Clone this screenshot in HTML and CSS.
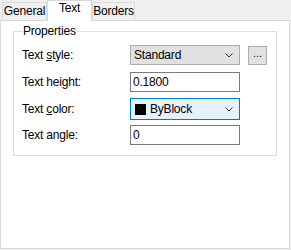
FILE: index.html
```html
<!DOCTYPE html>
<html lang="en">
<head>
    <meta charset="UTF-8">
    <title>Text Properties</title>
    <link rel="stylesheet" href="styles.css">
</head>
<body>
    <div class="tabs">
        <div class="tab tab-general">General</div>
        <div class="tab tab-text active">Text</div>
        <div class="tab tab-borders">Borders</div>
    </div>
    <div class="panel">
        <fieldset class="group">
            <legend>Properties</legend>

            <div class="row row-style">
                <label class="label">Text <u>s</u>tyle:</label>
                <div class="combo">
                    <span class="combo-text">Standard</span>
                    <svg class="chevron" width="8" height="5" viewBox="0 0 8 5"><path d="M0.5 0.5 L4 4 L7.5 0.5" fill="none" stroke="#333" stroke-width="1"/></svg>
                </div>
                <button class="browse">...</button>
            </div>

            <div class="row row-height">
                <label class="label">Text hei<u>g</u>ht:</label>
                <input class="field" type="text" value="0.1800">
            </div>

            <div class="row row-color">
                <label class="label">Text <u>c</u>olor:</label>
                <div class="combo combo-focus">
                    <span class="swatch"></span>
                    <span class="combo-text">ByBlock</span>
                    <svg class="chevron" width="8" height="5" viewBox="0 0 8 5"><path d="M0.5 0.5 L4 4 L7.5 0.5" fill="none" stroke="#333" stroke-width="1"/></svg>
                </div>
            </div>

            <div class="row row-angle">
                <label class="label">Text an<u>g</u>le:</label>
                <input class="field" type="text" value="0">
            </div>
        </fieldset>
    </div>
</body>
</html>
```
FILE: styles.css
```css
* {
    box-sizing: border-box;
}
body {
    margin: 0;
    width: 291px;
    height: 250px;
    background: #f0f0f0;
    font-family: "Liberation Sans", Arial, sans-serif;
    font-size: 12px;
    color: #000;
    overflow: hidden;
}
.tabs {
    display: flex;
    align-items: flex-end;
    height: 20px;
    padding-left: 2px;
}
.tab {
    height: 18px;
    border: 1px solid #d9d9d9;
    border-bottom: none;
    background: #f0f0f0;
    text-align: center;
    line-height: 16px;
    letter-spacing: -0.2px;
}
.tab-general {
    width: 45px;
}
.tab-text {
    width: 45px;
}
.tab-borders {
    width: 43px;
}
.tab.active {
    position: relative;
    z-index: 1;
    height: 21px;
    margin-bottom: -1px;
    background: #fff;
    line-height: 15px;
}
.panel {
    width: 290px;
    height: 229px;
    border: 1px solid #d9d9d9;
    background: #fff;
    padding: 0 0 0 12px;
}
.group {
    width: 264px;
    height: 132px;
    margin: 3px 0 0 0;
    padding: 0 0 0 8px;
    border: 1px solid #dcdcdc;
}
.group legend {
    padding: 0 1px;
    line-height: 15px;
    letter-spacing: -0.2px;
}
.row {
    display: flex;
    align-items: center;
    height: 20px;
}
.row-style {
    margin-top: 6px;
}
.row-height {
    margin-top: 7px;
}
.row-color {
    margin-top: 6px;
    height: 22px;
}
.row-angle {
    margin-top: 5px;
}
.label {
    width: 108px;
    letter-spacing: -0.2px;
}
.combo {
    display: flex;
    align-items: center;
    width: 110px;
    height: 20px;
    border: 1px solid #adadad;
    background: #e1e1e1;
    padding: 0 6px 0 3px;
}
.combo-text {
    flex: 1;
    letter-spacing: -0.2px;
}
.combo-focus {
    height: 22px;
    border-color: #0078d7;
    background: #e5f1fb;
    padding-left: 4px;
}
.swatch {
    width: 11px;
    height: 11px;
    background: #000;
    margin-right: 4px;
}
.chevron {
    display: block;
}
.browse {
    width: 19px;
    height: 19px;
    margin-left: 8px;
    padding: 0 0 4px;
    border: 1px solid #adadad;
    background: #e1e1e1;
    font-family: "Liberation Sans", Arial, sans-serif;
    font-size: 11px;
    line-height: 10px;
    color: #000;
}
.field {
    width: 110px;
    height: 20px;
    border: 1px solid #7a7a7a;
    background: #fff;
    padding: 0 2px;
    font-family: "Liberation Sans", Arial, sans-serif;
    font-size: 12px;
    letter-spacing: -0.2px;
    color: #000;
    outline: none;
}
```
